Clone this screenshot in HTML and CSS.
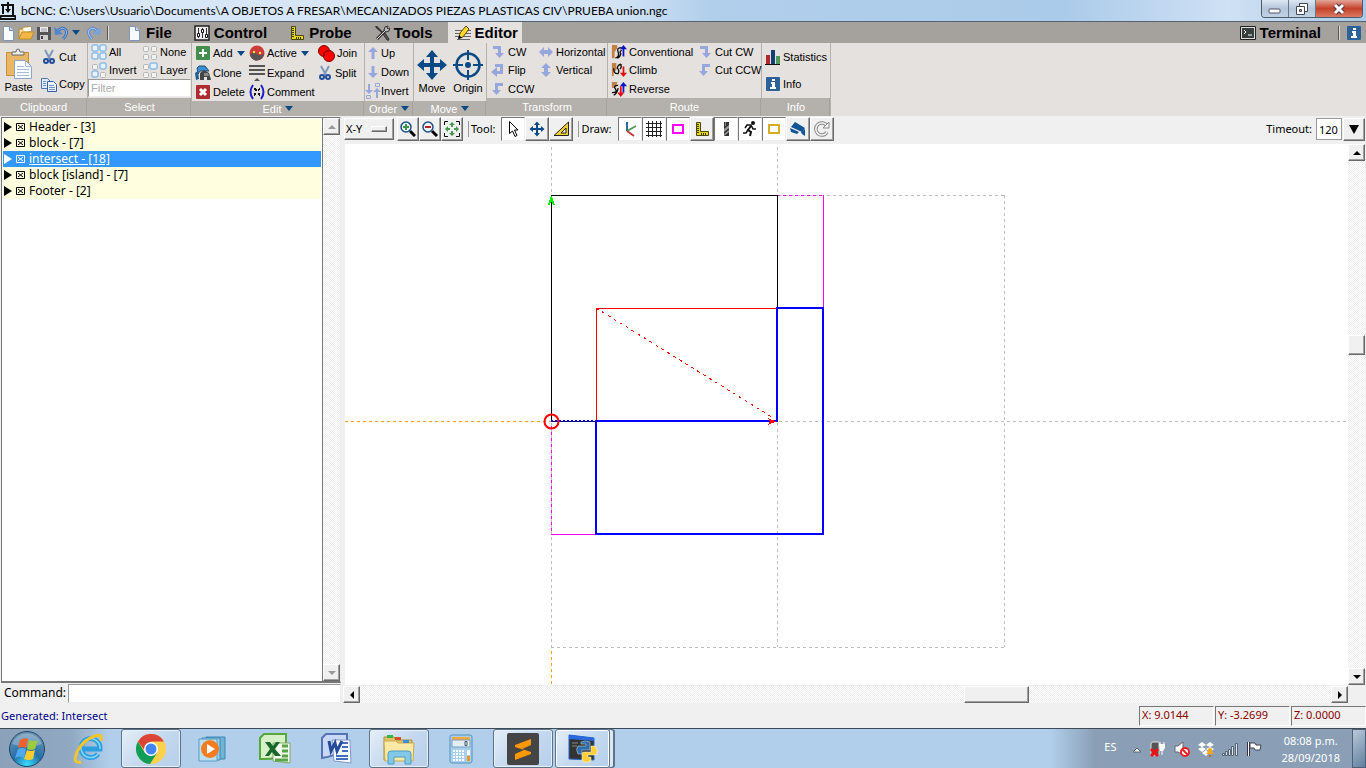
FILE: index.html
```html
<!DOCTYPE html>
<html lang="en">
<head>
    <meta charset="UTF-8">
    <title>bCNC</title>
    <link rel="stylesheet" href="styles.css">
</head>
<body>
<svg class="defs" aria-hidden="true">
    <symbol id="i-page" viewBox="0 0 16 16"><path d="M3.500 1.500h6l4 4v10h-10z" fill="#f7faff" stroke="#7f97b8"/><path d="M9.500 1.500v4h4" fill="#cfdcf0" stroke="#6d8fbd"/></symbol>
    <symbol id="i-open" viewBox="0 0 16 16"><path d="M1 14V4h4l1-2h7v3" fill="#f7dc8c" stroke="#b5872c"/><path d="M5 3l8-1v4H6z" fill="#fff"/><path d="M1 14L4 7h12l-3 7z" fill="#f3b748" stroke="#c68a24"/></symbol>
    <symbol id="i-save" viewBox="0 0 16 16"><path d="M1 2h14v13H1z" fill="#555"/><path d="M4 2h8v5H4z" fill="#eee"/><path d="M5 4h6M5 6h6" stroke="#999"/><path d="M4 10h8v5H4z" fill="#cfcfcf"/><path d="M5 11h2v3H5z" fill="#444"/></symbol>
    <symbol id="i-undo" viewBox="0 0 16 16"><path d="M4 6q4-5 8-1 2 4-3 9" fill="none" stroke="#3f74bd" stroke-width="3"/><path d="M4 6q4-5 8-1 2 4-3 9" fill="none" stroke="#8db4e8"/><path d="M0 2l1 8 8-1z" fill="#4f86cf"/></symbol>
    <symbol id="i-redo" viewBox="0 0 16 16"><path d="M12 6Q8 1 4 5q-2 4 3 9" fill="none" stroke="#5f8fd0" stroke-width="3"/><path d="M12 6Q8 1 4 5q-2 4 3 9" fill="none" stroke="#a9c6ee"/><path d="M16 2l-1 8-8-1z" fill="#76a2de"/></symbol>
    <symbol id="i-control" viewBox="0 0 16 16"><path d="M1 1h14v14H1z" fill="#eee" stroke="#222" stroke-width="1.500"/><path d="M4.500 3v10M8.500 3v10M12.500 3v10" stroke="#333"/><path d="M3.500 8.500h2v3h-2zM7.500 4.500h2v3h-2zM11.500 9.500h2v3h-2z" fill="#fff" stroke="#111"/></symbol>
    <symbol id="i-ruler" viewBox="0 0 16 16"><path d="M2.500 1.500h4v9h8v4h-12z" fill="#e5d827" stroke="#4e4900"/><path d="M3 3.500h2M3 5.500h2M3 7.500h2M3 9.500h2M3 11.500h2M7.500 12v2M9.500 12v2M11.500 12v2" stroke="#3d3900"/></symbol>
    <symbol id="i-tools" viewBox="0 0 16 16"><path d="M1 1l2 0 8 8-1 1-8-7z" fill="#333"/><path d="M9 9l4 6q2 1 2-1l-4-6z" fill="#555" stroke="#333"/><path d="M12 5L3 14" stroke="#333" stroke-width="3"/><path d="M12 5L3 14" stroke="#ddd"/><path d="M14 1l-3 1-1 3 2 2 3-1 1-3-2 1-1-1z" fill="#bbb" stroke="#333"/></symbol>
    <symbol id="i-edit" viewBox="0 0 16 16"><path d="M0 5.500h16M0 8.500h16M0 11.500h16M2 14.500h13" stroke="#666"/><path d="M4 13l1-5 6-7 3 3-6 8z" fill="#ffd829" stroke="#554600"/><path d="M3 14l1-4 3 3z" fill="#000"/></symbol>
    <symbol id="i-term" viewBox="0 0 16 16"><path d="M.500 1.500h15v13H.500z" fill="#ddd" stroke="#222"/><path d="M2 3h12v10H2z" fill="#37403d"/><path d="M4 5l2 2-2 2M8 10h4" fill="none" stroke="#fff"/></symbol>
    <symbol id="i-info" viewBox="0 0 16 16"><rect x="1" y="1" width="14" height="14" rx="1" fill="#2b6299"/><path d="M7 3h3v2H7zM6 6h4v5h1v2H5v-2h2V8H6z" fill="#fff"/></symbol>
    <symbol id="i-paste" viewBox="0 0 32 32"><path d="M3.500 4.500h22v23h-22z" fill="#e9b765" stroke="#c89036"/><path d="M9 7V4h4q0-3 2-3t2 3h4v3z" fill="#eee" stroke="#666"/><path d="M11.500 12.500h11l6 6v12h-17z" fill="#f9fcff" stroke="#8da4c4"/><path d="M22.500 12.500v6h6M14 18.500h7M14 21.500h12M14 24.500h12M14 27.500h12" fill="none" stroke="#a9bddb"/></symbol>
    <symbol id="i-cut" viewBox="0 0 16 16"><path d="M4 1l5 9M12 1L7 10" stroke="#7d98ba" stroke-width="2"/><circle cx="5" cy="12" r="2" fill="none" stroke="#234e99" stroke-width="2"/><circle cx="11" cy="12" r="2" fill="none" stroke="#234e99" stroke-width="2"/></symbol>
    <symbol id="i-copy" viewBox="0 0 16 16"><path d="M.500 2.500h6l3 3v7h-9z" fill="#dfeaff" stroke="#4b73b4"/><path d="M6.500 5.500h6l3 3v7h-9z" fill="#eaf2ff" stroke="#345faa"/><path d="M2 5.500h3M2 7.500h3M2 9.500h3M8 9.500h5M8 11.500h6M8 13.500h6" stroke="#6e92cc"/></symbol>
    <symbol id="i-all" viewBox="0 0 16 16"><g fill="#e8f2fc" stroke="#5fa5e5"><rect x="1" y="1" width="6" height="6" rx="1"/><rect x="9" y="1" width="6" height="6" rx="1"/><rect x="1" y="9" width="6" height="6" rx="1"/><rect x="9" y="9" width="6" height="6" rx="1"/></g></symbol>
    <symbol id="i-none" viewBox="0 0 16 16"><g fill="#f2f2f2" stroke="#b6b6b6"><rect x="1.500" y="2.500" width="5" height="5" rx="1"/><rect x="9.500" y="2.500" width="5" height="5" rx="1"/><rect x="1.500" y="10.500" width="5" height="5" rx="1"/><rect x="9.500" y="10.500" width="5" height="5" rx="1"/></g></symbol>
    <symbol id="i-invsel" viewBox="0 0 16 16"><g fill="#f2f2f2" stroke="#b6b6b6"><rect x="1.500" y="2.500" width="5" height="5" rx="1"/><rect x="9.500" y="10.500" width="5" height="5" rx="1"/></g><g fill="#e8f2fc" stroke="#5fa5e5"><rect x="9" y="1" width="6" height="6" rx="1"/><rect x="1" y="9" width="6" height="6" rx="1"/></g></symbol>
    <symbol id="i-layer" viewBox="0 0 16 16"><g fill="#f2f2f2" stroke="#b6b6b6"><rect x="1.500" y="2.500" width="5" height="5" rx="1"/><rect x="1.500" y="10.500" width="5" height="5" rx="1"/><rect x="9.500" y="10.500" width="5" height="5" rx="1"/></g><rect x="8" y="1" width="7" height="6" rx="1" fill="#e8f2fc" stroke="#5fa5e5"/></symbol>
    <symbol id="i-add" viewBox="0 0 16 16"><rect x="1" y="1" width="14" height="14" rx="1" fill="#438e4c"/><path d="M8 4v8M4 8h8" stroke="#fff" stroke-width="2"/></symbol>
    <symbol id="i-del" viewBox="0 0 16 16"><rect x="1" y="1" width="14" height="14" rx="1" fill="#ae2b30"/><path d="M5 5l6 6M11 5l-6 6" stroke="#fff" stroke-width="3"/></symbol>
    <symbol id="i-clone" viewBox="0 0 16 16"><path d="M2 3l2-2h6l4 5H5L3 9z" fill="#3a8fd6" stroke="#284d70"/><path d="M0 8l3-2 1 8-3 1z" fill="#1f5c90"/><path d="M5 15V8l4-3 5 3 2 7h-4v-3H9v3z" fill="#444"/><path d="M9 8h4l1 3H9z" fill="#888"/></symbol>
    <symbol id="i-active" viewBox="0 0 16 16"><circle cx="8" cy="8" r="7.500" fill="#cf3a3a"/><path d="M1 10q4-5 7-1 4 3 7-1-1 7-7 7.500-5 0-7-5.500z" fill="#555"/><circle cx="5" cy="7" r="1.200" fill="#ffe14b"/><circle cx="11" cy="8" r="1.200" fill="#ffe14b"/></symbol>
    <symbol id="i-expand" viewBox="0 0 16 16"><path d="M0 1h16M0 5h16M0 9h16" stroke="#555" stroke-width="2"/><path d="M5 16l3-3 3 3z" fill="#555"/></symbol>
    <symbol id="i-comment" viewBox="0 0 16 16"><path d="M4 1q-5 7 0 14M12 1q5 7 0 14" fill="none" stroke="#1a22c8" stroke-width="2"/><path d="M5 4h2v1h1v2H6V6H5zM10 4h1v2h-1v1H9V5h1zM5 9h2v2H6v1H5zM9 9h2v3h-1v-1H9z" fill="#111"/></symbol>
    <symbol id="i-join" viewBox="0 0 18 18"><circle cx="7" cy="7" r="5.500" fill="#f00" stroke="#700"/><circle cx="12" cy="12" r="5.500" fill="#f00" stroke="#700"/><path d="M7 12q0-5 5-5" fill="none" stroke="#900"/></symbol>
    <symbol id="i-up" viewBox="0 0 16 16"><path d="M8 2l5 5H9.500v7h-3V7H3z" fill="#98a6de"/></symbol>
    <symbol id="i-down" viewBox="0 0 16 16"><path d="M8 14L3 9h3.500V2h3v7H13z" fill="#98a6de"/></symbol>
    <symbol id="i-invord" viewBox="0 0 16 16"><path d="M4 11L0 7h3V1h2v6h3zM12 5l4 4h-3v6h-2V9H8z" fill="#98a6de"/><path d="M10.500.500h4v3h-4zM1.500 12.500h4v3h-4z" fill="none" stroke="#98a6de"/></symbol>
    <symbol id="i-move" viewBox="0 0 32 32"><path d="M16 1l6 7h-4v6h6v-4l7 6-7 6v-4h-6v6h4l-6 7-6-7h4v-6H8v4l-7-6 7-6v4h6V8h-4z" fill="#0a4a86"/></symbol>
    <symbol id="i-origin" viewBox="0 0 32 32"><circle cx="16" cy="16" r="11.500" fill="none" stroke="#0a4a86" stroke-width="2.500"/><circle cx="16" cy="16" r="3" fill="#0a4a86"/><path d="M16 1v10M16 21v10M1 16h10M21 16h10" stroke="#0a4a86" stroke-width="2"/></symbol>
    <symbol id="i-cw" viewBox="0 0 16 16"><path d="M3 2h8v7h3l-4.500 5L5 9h3V5H3z" fill="#98a6de"/></symbol>
    <symbol id="i-ccw" viewBox="0 0 16 16"><path d="M13 2H5v7H2l4.500 5L11 9H8V5h5z" fill="#98a6de"/></symbol>
    <symbol id="i-flip" viewBox="0 0 16 16"><path d="M5 2h8v10H7v3L1 10l6-5v4h3V5H5z" fill="#98a6de"/></symbol>
    <symbol id="i-horiz" viewBox="0 0 16 16"><path d="M1 8l5-5v3h4V3l5 5-5 5v-3H6v3z" fill="#98a6de"/></symbol>
    <symbol id="i-vert" viewBox="0 0 16 16"><path d="M8 1l5 5h-3v4h3l-5 5-5-5h3V6H3z" fill="#98a6de"/></symbol>
    <symbol id="i-conv" viewBox="0 0 18 18"><path d="M1 1h6v4L4 9v7H1z" fill="#c08048"/><path d="M12 4Q6 4 8 9q2 5-3 7M12 7q-3 2-1 4-1 4-4 5" fill="none" stroke="#111" stroke-width="1.500"/><path d="M14 14V4" stroke="#0b15c8" stroke-width="2"/><path d="M14 1l4 5h-8z" fill="#0b15c8"/></symbol>
    <symbol id="i-climb" viewBox="0 0 18 18"><path d="M1 1h5v8l-3 3v4H1z" fill="#c08048"/><path d="M3 7q0 7 5 6 2-4-1-6 1-5 5-4M10 2q3 3 0 6" fill="none" stroke="#111" stroke-width="1.500"/><path d="M14 5v9" stroke="#e01010" stroke-width="2"/><path d="M14 17l4-5h-8z" fill="#e01010"/></symbol>
    <symbol id="i-rev" viewBox="0 0 18 18"><path d="M1 1h6l-1 5-3 2H1z" fill="#c08048"/><path d="M8 5q-6 0-3 4 3 4-4 4M8 8q-1 6-5 8" fill="none" stroke="#111" stroke-width="1.500"/><path d="M14 13V4" stroke="#0b15c8" stroke-width="2"/><path d="M14 1l4 5h-8z" fill="#0b15c8"/><path d="M11 6v8" stroke="#e01010" stroke-width="2"/><path d="M11 18l4-5H7z" fill="#e01010"/></symbol>
    <symbol id="i-stat" viewBox="0 0 16 16"><path d="M1 6h4v9H1z" fill="#b02b30"/><path d="M6 1h4v14H6z" fill="#123f78"/><path d="M11 7h4v8h-4z" fill="#4f9a55"/><path d="M0 15.500h15" stroke="#111"/></symbol>
    <symbol id="i-box" viewBox="0 0 10 10"><path d="M.500 1.500h8v7h-8zM2 3l5 4M7 3L2 7" fill="none" stroke="currentColor"/></symbol>
    <symbol id="i-zin" viewBox="0 0 16 16"><path d="M10 10l5 5" stroke="#000" stroke-width="3"/><circle cx="6" cy="6" r="5" fill="#eef4f8" stroke="#1b4f86" stroke-width="1.500"/><path d="M6 3v6M3 6h6" stroke="#3d9447" stroke-width="2"/></symbol>
    <symbol id="i-zout" viewBox="0 0 16 16"><path d="M10 10l5 5" stroke="#000" stroke-width="3"/><circle cx="6" cy="6" r="5" fill="#eef4f8" stroke="#1b4f86" stroke-width="1.500"/><path d="M3 6h6" stroke="#b5252b" stroke-width="2"/></symbol>
    <symbol id="i-fit" viewBox="0 0 16 16"><path d="M.500 4V.500H4M12 .500h3.500V4M15.500 12v3.500H12M4 15.500H.500V12" fill="none" stroke="#111"/><path d="M8 1l3 3H9v2H7V4H5zM8 15l-3-3h2v-2h2v2h2zM1 8l3-3v2h2v2H4v2zM15 8l-3 3V9h-2V7h2V5z" fill="#459a4e"/></symbol>
    <symbol id="i-arrow" viewBox="0 0 16 16"><path d="M4.500.500v12l3-2.500 2.500 5.500 2-1-2.500-5.500h3.500z" fill="#fff" stroke="#000"/></symbol>
    <symbol id="i-tri" viewBox="0 0 16 16"><path d="M1 14.500L15.500 1v13.500z" fill="#f4cf34" stroke="#222"/><path d="M8 12l5-5v5z" fill="#eee" stroke="#222"/></symbol>
    <symbol id="i-axes" viewBox="0 0 16 16"><path d="M5 1v9" stroke="#2b6a9e" stroke-width="2"/><path d="M5 10l9-5" stroke="#4d9d56" stroke-width="2"/><path d="M5 10l7 5" stroke="#c4393c" stroke-width="2"/></symbol>
    <symbol id="i-grid" viewBox="0 0 16 16"><path d="M2.500 0v16M6.500 0v16M10.500 0v16M14.500 0v16M0 2.500h16M0 6.500h16M0 10.500h16M0 14.500h16" stroke="#222"/></symbol>
    <symbol id="i-margin" viewBox="0 0 16 16"><path d="M3 4h10v8H3z" fill="#fff" stroke="#f0f" stroke-width="2"/></symbol>
    <symbol id="i-work" viewBox="0 0 16 16"><path d="M3 4h10v8H3z" fill="#fff" stroke="#d6ad26" stroke-width="2"/></symbol>
    <symbol id="i-mill" viewBox="0 0 16 16"><path d="M6 1h5v14H6z" fill="#333"/><path d="M6 8l5-4v3L6 11zM6 13l5-4v2l-5 4z" fill="#999"/><path d="M7.500 1v4" stroke="#888"/></symbol>
    <symbol id="i-run" viewBox="0 0 16 16"><circle cx="11" cy="2" r="2" fill="#111"/><path d="M9 5l-3 4 3 2-1 4" fill="none" stroke="#111" stroke-width="2"/><path d="M3 7l2-3h4l2 4h3M6 9l-2 3H1" fill="none" stroke="#111" stroke-width="1.500"/></symbol>
    <symbol id="i-cam" viewBox="0 0 16 16"><path d="M5 1l10 6-3 4L1 6z" fill="#0f5596"/><path d="M0 7l9 4-2 2-6-2z" fill="#0f5596"/><path d="M11 11l4-3v7l-3-2z" fill="#0f5596"/></symbol>
    <symbol id="i-refresh" viewBox="0 0 16 16"><path d="M13 5a6 6 0 1 0 0 6" fill="none" stroke="#888" stroke-width="3.500"/><path d="M13 5a6 6 0 1 0 0 6" fill="none" stroke="#f4f4f4" stroke-width="1.500"/><path d="M9 7h6V1z" fill="#f4f4f4" stroke="#888"/></symbol>
</svg>

<header class="titlebar">
    <svg class="app-icon" viewBox="0 0 16 18"><path d="M1 3h13M8 0v10M3 3v9M13 3v10M1 14h14l1 3H0z" fill="none" stroke="#111" stroke-width="2"/><path d="M5 7h6l-3 4z" fill="#111"/></svg>
    <h1>bCNC: C:\Users\Usuario\Documents\A OBJETOS A FRESAR\MECANIZADOS PIEZAS PLASTICAS CIV\PRUEBA union.ngc</h1>
    <div class="win-buttons">
        <button aria-label="Minimize"><svg width="14" height="12"><rect x="1" y="6" width="11" height="4" rx="1" fill="#fff" stroke="#556"/></svg></button>
        <button aria-label="Restore"><svg width="14" height="14"><path d="M4.500 1.500h8v8h-8z" fill="#fff" stroke="#445"/><path d="M1.500 4.500h8v8h-8z" fill="#fff" stroke="#445"/><path d="M4.500 7.500h2v2h-2z" fill="#9bb" stroke="#445"/></svg></button>
        <button class="close" aria-label="Close"><svg width="14" height="12"><path d="M3 2l8 8M11 2l-8 8" stroke="#534" stroke-width="5"/><path d="M3 2l8 8M11 2l-8 8" stroke="#fff" stroke-width="3"/></svg></button>
    </div>
</header>

<nav class="tabbar">
    <div class="quick">
        <button aria-label="New"><svg class="ico"><use href="#i-page"/></svg></button>
        <button aria-label="Open"><svg class="ico"><use href="#i-open"/></svg></button>
        <button aria-label="Save"><svg class="ico"><use href="#i-save"/></svg></button>
        <button aria-label="Undo"><svg class="ico"><use href="#i-undo"/></svg></button>
        <button aria-label="Undo list"><i class="caret"></i></button>
        <button aria-label="Redo"><svg class="ico"><use href="#i-redo"/></svg></button>
    </div>
    <i class="sep"></i>
    <button class="tab"><svg class="ico"><use href="#i-page"/></svg>File</button>
    <button class="tab"><svg class="ico"><use href="#i-control"/></svg>Control</button>
    <button class="tab"><svg class="ico"><use href="#i-ruler"/></svg>Probe</button>
    <button class="tab"><svg class="ico"><use href="#i-tools"/></svg>Tools</button>
    <button class="tab current"><svg class="ico"><use href="#i-edit"/></svg>Editor</button>
    <button class="tab terminal"><svg class="ico"><use href="#i-term"/></svg>Terminal</button>
    <i class="sep"></i>
    <button class="help" aria-label="About"><svg class="ico"><use href="#i-info"/></svg></button>
</nav>

<section class="ribbon">
    <div class="group clipboard">
        <div class="tools">
            <button class="big"><svg><use href="#i-paste"/></svg>Paste</button>
            <button><svg class="ico"><use href="#i-cut"/></svg>Cut</button>
            <button><svg class="ico"><use href="#i-copy"/></svg>Copy</button>
        </div>
        <h2>Clipboard</h2>
    </div>
    <div class="group select">
        <div class="tools">
            <button><svg class="ico"><use href="#i-all"/></svg>All</button>
            <button><svg class="ico"><use href="#i-none"/></svg>None</button>
            <button><svg class="ico"><use href="#i-invsel"/></svg>Invert</button>
            <button><svg class="ico"><use href="#i-layer"/></svg>Layer</button>
            <input type="text" placeholder="Filter" aria-label="Filter">
        </div>
        <h2>Select</h2>
    </div>
    <div class="group edit">
        <div class="tools">
            <button><svg class="ico"><use href="#i-add"/></svg>Add<i class="caret"></i></button>
            <button><svg class="ico"><use href="#i-active"/></svg>Active<i class="caret"></i></button>
            <button><svg class="ico wide"><use href="#i-join"/></svg>Join</button>
            <button><svg class="ico"><use href="#i-clone"/></svg>Clone</button>
            <button><svg class="ico"><use href="#i-expand"/></svg>Expand</button>
            <button><svg class="ico"><use href="#i-cut"/></svg>Split</button>
            <button><svg class="ico"><use href="#i-del"/></svg>Delete</button>
            <button><svg class="ico"><use href="#i-comment"/></svg>Comment</button>
        </div>
        <button class="more">Edit<i class="caret"></i></button>
    </div>
    <div class="group order">
        <div class="tools">
            <button><svg class="ico"><use href="#i-up"/></svg>Up</button>
            <button><svg class="ico"><use href="#i-down"/></svg>Down</button>
            <button><svg class="ico"><use href="#i-invord"/></svg>Invert</button>
        </div>
        <button class="more">Order<i class="caret"></i></button>
    </div>
    <div class="group move">
        <div class="tools">
            <button class="big"><svg><use href="#i-move"/></svg>Move</button>
            <button class="big"><svg><use href="#i-origin"/></svg>Origin</button>
        </div>
        <button class="more">Move<i class="caret"></i></button>
    </div>
    <div class="group transform">
        <div class="tools">
            <button><svg class="ico"><use href="#i-cw"/></svg>CW</button>
            <button><svg class="ico"><use href="#i-horiz"/></svg>Horizontal</button>
            <button><svg class="ico"><use href="#i-flip"/></svg>Flip</button>
            <button><svg class="ico"><use href="#i-vert"/></svg>Vertical</button>
            <button><svg class="ico"><use href="#i-ccw"/></svg>CCW</button>
        </div>
        <h2>Transform</h2>
    </div>
    <div class="group route">
        <div class="tools">
            <button><svg class="ico"><use href="#i-conv"/></svg>Conventional</button>
            <button><svg class="ico"><use href="#i-cw"/></svg>Cut CW</button>
            <button><svg class="ico"><use href="#i-climb"/></svg>Climb</button>
            <button><svg class="ico"><use href="#i-ccw"/></svg>Cut CCW</button>
            <button><svg class="ico"><use href="#i-rev"/></svg>Reverse</button>
        </div>
        <h2>Route</h2>
    </div>
    <div class="group info">
        <div class="tools">
            <button><svg class="ico"><use href="#i-stat"/></svg>Statistics</button>
            <button><svg class="ico"><use href="#i-info"/></svg>Info</button>
        </div>
        <h2>Info</h2>
    </div>
</section>

<main>
    <section class="editor">
        <div class="listing">
            <ul>
                <li><svg><use href="#i-box"/></svg>Header - [3]</li>
                <li><svg><use href="#i-box"/></svg>block - [7]</li>
                <li class="current"><svg><use href="#i-box"/></svg><span>intersect - [18]</span></li>
                <li><svg><use href="#i-box"/></svg>block [island] - [7]</li>
                <li><svg><use href="#i-box"/></svg>Footer - [2]</li>
            </ul>
            <div class="scroll vertical disabled">
                <button aria-label="Scroll list up"><i class="tip up"></i></button>
                <button aria-label="Scroll list down"><i class="tip down"></i></button>
            </div>
        </div>
        <div class="command">
            <label for="cmd">Command:</label>
            <input type="text" id="cmd">
        </div>
    </section>

    <section class="view">
        <div class="toolbar">
            <div class="plane">
                <select aria-label="View"><option>X-Y</option><option>X-Z</option><option>Y-Z</option></select>
                <i class="knob"></i>
            </div>
            <div class="set zoom">
                <button aria-label="Zoom in"><svg class="ico"><use href="#i-zin"/></svg></button>
                <button aria-label="Zoom out"><svg class="ico"><use href="#i-zout"/></svg></button>
                <button aria-label="Fit to screen"><svg class="ico"><use href="#i-fit"/></svg></button>
            </div>
            <span class="caption">Tool:</span>
            <div class="set">
                <button class="on" aria-label="Select tool"><svg class="ico"><use href="#i-arrow"/></svg></button>
                <button aria-label="Pan"><svg class="ico"><use href="#i-move"/></svg></button>
                <button aria-label="Measure"><svg class="ico"><use href="#i-tri"/></svg></button>
            </div>
            <span class="caption">Draw:</span>
            <div class="set">
                <button class="on" aria-label="Axes"><svg class="ico"><use href="#i-axes"/></svg></button>
                <button class="on" aria-label="Grid"><svg class="ico"><use href="#i-grid"/></svg></button>
                <button class="on" aria-label="Margins"><svg class="ico"><use href="#i-margin"/></svg></button>
                <button aria-label="Probe"><svg class="ico"><use href="#i-ruler"/></svg></button>
                <button class="on" aria-label="Paths"><svg class="ico"><use href="#i-mill"/></svg></button>
                <button class="on" aria-label="Rapid motion"><svg class="ico"><use href="#i-run"/></svg></button>
                <button class="on" aria-label="Workarea"><svg class="ico"><use href="#i-work"/></svg></button>
                <button aria-label="Camera"><svg class="ico"><use href="#i-cam"/></svg></button>
                <button aria-label="Refresh"><svg class="ico"><use href="#i-refresh"/></svg></button>
            </div>
            <label class="timeout" for="timeout">Timeout:</label>
            <input type="text" id="timeout" value="120">
            <button class="drop" aria-label="Timeout values"><i></i></button>
        </div>
        <div class="canvas">
            <svg shape-rendering="crispEdges" fill="none">
                <!-- grid -->
                <path class="dash" stroke="#bebebe" d="M206.500 3V541M432.500 3V503M659.500 51V503M206 51.500H659M206 277.500H1203M206 503.500H659"/>
                <!-- work area -->
                <path class="dash" stroke="#ffa500" d="M0 277.500H206M206.500 507V541"/>
                <!-- margins -->
                <path stroke="#f0f" d="M478.500 51V164M206 390.500H251"/>
                <path class="dash" stroke="#f0f" d="M432 51.500H478M206.500 282V390"/>
                <!-- toolpaths -->
                <path stroke="#000" d="M251 277.500H206.500V51.500H432.500V164"/>
                <path stroke="#f00" d="M251.500 277V164.500H432"/>
                <path stroke="#f00" stroke-dasharray="3 4" d="M251 164L430 275"/>
                <path stroke="#00f" stroke-width="2" stroke-dasharray="2 2" d="M206 277H251"/>
                <path stroke="#00f" stroke-width="2" d="M251 390V277H432V164H478V390H250"/>
                <path fill="#0e0" d="M206 52L203 61H205L206 58H207L208 61H210L207 52z"/>
                <path fill="#f00" d="M423 274L431 277.500L423 281L425 277.500z"/>
                <circle cx="206.500" cy="277.500" r="7" stroke="#f00" stroke-width="2" shape-rendering="auto"/>
            </svg>
        </div>
        <div class="scroll vertical">
            <button aria-label="Scroll up"><i class="tip up"></i></button>
            <div class="trough"><i class="thumb"></i></div>
            <button aria-label="Scroll down"><i class="tip down"></i></button>
        </div>
        <div class="scroll horizontal">
            <button aria-label="Scroll left"><i class="tip left"></i></button>
            <div class="trough"><i class="thumb"></i></div>
            <button aria-label="Scroll right"><i class="tip right"></i></button>
        </div>
    </section>
</main>

<footer class="status">
    <span class="message">Generated: Intersect</span>
    <output>X: 9.0144</output>
    <output>Y: -3.2699</output>
    <output>Z: 0.0000</output>
</footer>

<div class="taskbar">
    <button class="start" aria-label="Start">
        <svg width="38" height="38" viewBox="0 0 38 38">
            <defs><radialGradient id="orb" cx=".5" cy=".95" r=".9"><stop offset="0" stop-color="#39e0ff"/><stop offset=".45" stop-color="#2470a8"/><stop offset="1" stop-color="#6d94b4"/></radialGradient></defs>
            <circle cx="19" cy="19" r="17.500" fill="url(#orb)" stroke="#1f4565"/>
            <path d="M4 14a16 16 0 0 1 30 0q-15 6-30 0z" fill="#fff" opacity=".25"/>
            <path d="M12 10q4-3 8-1l-2 9q-4-2-8 0z" fill="#f0602c"/><path d="M21 10q4 2 9 0l-3 9q-4 2-8 0z" fill="#9bcb3c"/>
            <path d="M10 19q4-2 8 0l-2 9q-4-3-9 0z" fill="#4fa9ec"/><path d="M19 20q4 2 8 0l-2 9q-4 2-9 0z" fill="#fecb2e"/>
        </svg>
    </button>
    <div class="apps">
        <button aria-label="Internet Explorer"><svg width="32" height="32" viewBox="0 0 32 32"><path d="M25 21a9.500 9.500 0 1 1 2-5H10" fill="none" stroke="#2b9fe2" stroke-width="5"/><path d="M25 21a9.500 9.500 0 1 1 2-5" fill="none" stroke="#8ad6fa" stroke-width="1.500"/><path d="M28 8q2-8-6-5Q10 7 4 19q-5 12 4 10" fill="none" stroke="#f3c52d" stroke-width="3"/></svg></button>
        <button class="open" aria-label="Chrome"><svg width="30" height="30" viewBox="0 0 30 30"><circle cx="15" cy="15" r="15" fill="#fdd24a"/><path d="M2 7.500A15 15 0 0 0 14 30l7-11H9z" fill="#0f9d58"/><path d="M2 7.500A15 15 0 0 1 28 7.500H15L9 17z" fill="#db4437"/><circle cx="15" cy="15" r="7" fill="#fff"/><circle cx="15" cy="15" r="5.500" fill="#4285f4"/></svg></button>
        <button aria-label="Media Player"><svg width="30" height="28" viewBox="0 0 30 28"><path d="M8 2h19v22H8z" fill="#6fb3d6" stroke="#3f88b2"/><path d="M4 3h18v22H4z" fill="#9bd0ea" stroke="#3f88b2"/><path d="M1 4h18v22H1z" fill="#b9dff1" stroke="#5b9dc2"/><circle cx="12" cy="14" r="9" fill="#f47c20"/><path d="M9 9l8 5-8 5z" fill="#fff"/></svg></button>
        <button aria-label="Excel"><svg width="32" height="32" viewBox="0 0 32 32"><path d="M5 1h22v18q-8 8-26 7V5z" fill="#d8f0c8" stroke="#56a83a" stroke-width="2"/><path d="M14 10h17v20l-17-2z" fill="#f4fbf0" stroke="#7aa768"/><path d="M23 13h6M23 18h6M23 23h6M16 27h13" stroke="#5ba445" stroke-width="3"/><path d="M6 9h5l3 4 3-4h4l-5 7 6 7h-6l-3-4-3 4H6l5-7z" fill="#19692c"/></svg></button>
        <button aria-label="Word"><svg width="32" height="32" viewBox="0 0 32 32"><path d="M5 1h21v6q0 14-25 18V5z" fill="#c9d8f4" stroke="#5673b5" stroke-width="2"/><path d="M11 7h18l1 23-17-2z" fill="#f6f9ff" stroke="#7f97c8"/><path d="M21 10h6M21 14h6M21 18h6M15 23h12M15 26h12" stroke="#456cbd" stroke-width="2"/><path d="M8 8l2 10 4-8 2 8 5-10" fill="none" stroke="#244b9b" stroke-width="3"/></svg></button>
        <button class="open" aria-label="Explorer"><svg width="34" height="32" viewBox="0 0 34 32"><path d="M2 4h10l2 3h16v20H2z" fill="#e3c267" stroke="#b08e36"/><path d="M5 2h6v3H5z" fill="#38b549"/><path d="M13 4h6v3h-6z" fill="#d44e2f"/><path d="M2 8h12l2 2h16l-1 18H3z" fill="#f9e9a4" stroke="#c9ab4e"/><path d="M21 7h6v3h-6z" fill="#3d8fde"/><path d="M6 31V21q0-3 3-3h17q3 0 3 3v10h-6v-7H12v7z" fill="#84c8e8" stroke="#4d9cc5"/></svg></button>
        <button aria-label="Calculator"><svg width="24" height="30" viewBox="0 0 24 30"><rect x="1" y="1" width="22" height="28" rx="2" fill="#a7d0ee" stroke="#5393bf"/><path d="M3 3h18v3H3z" fill="#f7a63c"/><path d="M3 6h18v7H3z" fill="#e4eef6" stroke="#7a9cba"/><path d="M16 7.500h2v4h-2z" fill="none" stroke="#456"/><path d="M4 17h12M4 20h12M4 23h12M4 26h12" stroke="#fff" stroke-width="2" stroke-dasharray="2 1"/><path d="M18 16h3v5h-3z" fill="#fff"/><path d="M18 22h3v5h-3z" fill="#f39320"/></svg></button>
        <button class="open" aria-label="Sublime Text"><svg width="32" height="32" viewBox="0 0 32 32"><rect width="32" height="32" rx="2" fill="#454545"/><path d="M8 12l16-6v6l-9 4 9 3v2L8 27v-6l9-4-9-3z" fill="#ff9800"/></svg></button>
        <button class="open stacked" aria-label="Python"><svg width="30" height="30" viewBox="0 0 30 30"><path d="M1 1l25 3v22L1 25z" fill="#333" stroke="#2364c8"/><path d="M1 1l25 3v3L1 5z" fill="#2a6ae0"/><path d="M4 9h6M4 12h5" stroke="#888"/><path d="M13 8q4-2 9 0v8h-8v4h-4q-3-5 0-8h8v-2h-5z" fill="#2f6fa5" stroke="#cde" stroke-width=".5"/><path d="M23 12h4q4 5 1 9h-8v2h3v4q-4 3-9 0v-7q0-2 2-2h7z" fill="#fdd03b" stroke="#fff" stroke-width=".5"/></svg></button>
    </div>
    <div class="tray">
        <span class="lang">ES</span>
        <svg width="10" height="16"><path d="M1 11l4-4 4 4z" fill="#fff" stroke="#567"/></svg>
        <svg width="16" height="16"><path d="M1 3q0-2 2-2h6v13H1z" fill="#555" stroke="#ddd"/><path d="M9 3h6v4l-2 3h-3z" fill="#fff"/><path d="M10 1v3M14 1v3M12 9v5" stroke="#fff"/><path d="M1 8l7 7M8 8l-7 7" stroke="#e11" stroke-width="3"/></svg>
        <svg width="16" height="16"><path d="M1 5h3l5-4v13L4 11H1z" fill="#fff" stroke="#667"/><circle cx="11" cy="11" r="4" fill="#fff" stroke="#e32424" stroke-width="2"/><path d="M8 8l6 6" stroke="#e32424" stroke-width="2"/></svg>
        <svg width="16" height="16"><path d="M4 1l4 3-4 2-4-2zM12 1l4 3-4 2-4-2zM4 6l4 2-4 3-4-3zM12 6l4 2-4 3-4-3zM4 12l4-3 3 3-3 3z" fill="#fff"/><path d="M8 13q2-1 2-5 2-2 4 0 0 4 2 5z" fill="#f5a81c"/><path d="M11 14h2v2h-2z" fill="#b8740b"/></svg>
        <svg width="16" height="16"><path d="M.500 12.500h2v2h-2zM3.500 10.500h2v4h-2zM6.500 8.500h2v6h-2zM9.500 5.500h2v9h-2zM13.500 2.500h2v12h-2z" fill="#dfe6ee" stroke="#556677"/></svg>
        <svg width="16" height="16"><path d="M2.500 1v14" stroke="#334" stroke-width="3"/><path d="M2.500 1v14" stroke="#fff"/><path d="M4 2h5l1 2h5l-1 5H9L8 7H4z" fill="#fff" stroke="#445"/></svg>
        <time class="clock">08:08 p.m.<br>28/09/2018</time>
        <button class="desktop" aria-label="Show desktop"></button>
    </div>
</div>
</body>
</html>
```

FILE: styles.css
```css
* {
    box-sizing: border-box;
    margin: 0;
    padding: 0;
}

body {
    display: flex;
    flex-direction: column;
    height: 100vh;
    background: #f0f0f0;
    color: #000;
    font: 11px/16px "Noto Sans", "Open Sans", sans-serif;
    overflow: hidden;
}

button, input, select {
    border: none;
    border-radius: 0;
    background: none;
    color: inherit;
    font: inherit;
}

svg {
    display: block;
    flex: none;
}

.defs {
    position: absolute;
    width: 0;
    height: 0;
}

.ico {
    width: 16px;
    height: 16px;
}

.caret {
    border: 4px solid transparent;
    border-top: 5px solid #0a4a86;
    border-bottom: none;
    margin-left: 2px;
}

/* title bar */
.titlebar {
    display: flex;
    align-items: center;
    gap: 5px;
    height: 22px;
    background: linear-gradient(90deg, #d9e8f8, #d3e4f6 45%, #b1cfeb 52%, #abcbea 78%, #cfe1f4 90%, #a9c9e9);
    border-bottom: 1px solid #56626e;
    flex: none;
}

.app-icon {
    width: 16px;
    height: 18px;
}

.titlebar h1 {
    font: 12px/20px Lato, "Noto Sans", sans-serif;
    white-space: nowrap;
}

.win-buttons {
    display: flex;
    align-self: flex-start;
    margin: 0 3px 0 auto;
    border: 1px solid #4d5a68;
    border-top: none;
    border-radius: 0 0 4px 4px;
    overflow: hidden;
}

.win-buttons button {
    display: flex;
    align-items: center;
    justify-content: center;
    width: 27px;
    height: 17px;
    border-right: 1px solid #66778a;
    background: linear-gradient(#dce7f3, #b4c6da 50%, #bfd2e6);
}

.win-buttons .close {
    width: 46px;
    border: none;
    background: linear-gradient(#e3a598, #c5412a 50%, #da7a60);
}

/* page tabs */
.tabbar {
    display: flex;
    align-items: center;
    height: 21px;
    padding-right: 4px;
    background: #a5a19d;
    flex: none;
}

.quick {
    display: flex;
    align-items: center;
    gap: 2px;
}

.quick .caret {
    display: block;
    margin: 0 3px 0 0;
}

.sep {
    width: 2px;
    height: 14px;
    margin: 0 6px;
    border-left: 1px solid #555;
    border-right: 1px solid #ddd;
}

.tab {
    display: flex;
    align-items: center;
    gap: 4px;
    height: 21px;
    padding: 0 11px;
    font: bold 15px "Liberation Sans", Arial, sans-serif;
}

.tab.current {
    padding: 0 4px 0 7px;
    margin-left: 4px;
    background: #e5e1de;
}

.terminal {
    margin-left: auto;
}

/* ribbon */
.ribbon {
    display: flex;
    height: 73px;
    background: #e5e1de;
    font: 11px/14px "Liberation Sans", Arial, sans-serif;
    flex: none;
}

.group {
    display: flex;
    flex-direction: column;
    border-right: 1px solid #b4b0ac;
}

.group h2, .more {
    height: 18px;
    background: #b4b0ac;
    color: #fff;
    font: 11px/18px "Liberation Sans", Arial, sans-serif;
    text-align: center;
    box-shadow: inset -1px 0 #a5a19d;
}

.more {
    display: flex;
    align-items: center;
    justify-content: center;
    gap: 2px;
    height: 15px;
    line-height: 14px;
}

.tools {
    display: grid;
    flex: 1;
    align-items: center;
    justify-content: start;
}

.tools button {
    display: flex;
    align-items: center;
    gap: 2px;
    white-space: nowrap;
}

.tools .big {
    flex-direction: column;
    gap: 0;
}

.big svg {
    width: 32px;
    height: 32px;
}

.clipboard {
    width: 88px;
}

.clipboard .tools {
    grid-template-columns: 37px 50px;
    column-gap: 4px;
}

.clipboard .big {
    grid-row: span 2;
}

.select {
    width: 104px;
}

.select .tools {
    grid-template-columns: 51px 49px;
    grid-template-rows: 18px 18px 18px;
    padding-left: 3px;
}

.select input {
    grid-column: span 2;
    width: 103px;
    height: 18px;
    margin-left: -3px;
    padding-left: 2px;
    background: #fff;
    border: 1px solid #aaa;
    border-color: #999 #eee #eee #999;
}

.select input::placeholder {
    color: #aaa;
    opacity: 1;
}

.edit {
    width: 173px;
}

.edit .tools {
    grid-template-columns: 54px 68px 48px;
    padding-left: 3px;
}

.edit .wide {
    width: 18px;
    height: 18px;
}

.order {
    width: 49px;
}

.order .tools button {
    gap: 0;
}

.move {
    width: 73px;
}

.move .tools {
    grid-template-columns: 36px 36px;
}

.transform {
    width: 121px;
}

.transform .tools {
    grid-template-columns: 48px 69px;
    padding-left: 3px;
}

.route {
    width: 154px;
}

.route .tools {
    grid-template-columns: 86px 64px;
    padding-left: 3px;
}

.info {
    width: 69px;
}

.info .tools {
    padding-left: 3px;
}

/* file listing */
main {
    display: grid;
    grid-template-columns: 341px 1fr;
    flex: 1;
    min-height: 0;
}

.editor {
    display: flex;
    flex-direction: column;
    padding: 1px 0 0 1px;
    font-size: 12px;
}

.listing {
    display: flex;
    flex: 1;
    border: 1px solid #777;
    border-bottom: 2px solid #777;
    border-right-color: #eee;
    background: #fff;
}

.listing ul {
    flex: 1;
    padding: 1px;
    border-right: 1px solid #777;
    list-style: none;
}

.listing li {
    display: flex;
    align-items: center;
    height: 16px;
    background: #ffffe0;
}

.listing li::before {
    content: "";
    border: 5px solid transparent;
    border-left: 8px solid;
    border-right: none;
    margin: 0 4px 0 1px;
}

.listing li svg {
    width: 10px;
    height: 10px;
    margin-right: 3px;
}

.listing .current {
    background: #3399ff;
    color: #fff;
}

.current span {
    text-decoration: underline;
}

.command {
    display: flex;
    align-items: center;
    height: 20px;
    gap: 2px;
    padding-left: 3px;
}

.command input {
    flex: 1;
    height: 19px;
    background: #fff;
    border: 1px solid #999;
    border-color: #999 #eee #eee #999;
}

/* scrollbars */
.scroll {
    display: flex;
    background: repeating-conic-gradient(#fff 0 25%, #eee 0 50%) 0 0 / 2px 2px;
}

.vertical {
    flex-direction: column;
    width: 17px;
}

.scroll button, .thumb, .set button, .plane, .drop {
    background: #f0f0f0;
    border: 1px solid #fff;
    border-color: #fff #696969 #696969 #fff;
    box-shadow: inset -1px -1px #a0a0a0;
}

.scroll button {
    display: flex;
    align-items: center;
    justify-content: center;
    width: 17px;
    height: 17px;
    flex: none;
}

.vertical.disabled {
    justify-content: space-between;
}

.tip {
    border: 4px solid transparent;
}

.tip.up {
    border-top: none;
    border-bottom-color: #000;
}

.tip.down {
    border-bottom: none;
    border-top-color: #000;
}

.tip.left {
    border-left: none;
    border-right-color: #000;
}

.tip.right {
    border-right: none;
    border-left-color: #000;
}

.disabled .tip.up {
    border-bottom-color: #999;
}

.disabled .tip.down {
    border-top-color: #999;
}

.trough {
    display: flex;
    flex: 1;
}

.vertical .trough {
    flex-direction: column;
}

.trough::before, .trough::after {
    content: "";
    flex: 2;
}

.vertical .trough::before, .horizontal .trough::after {
    flex: 1;
}

.vertical .trough::after {
    flex: 1.8;
}

.vertical .thumb {
    height: 20px;
}

.horizontal .thumb {
    width: 65px;
}

.horizontal {
    margin-left: 2px;
    border-top: 1px solid #f0f0f0;
}

/* drawing */
.view {
    display: grid;
    grid-template: 28px 1fr 18px / 1fr 18px;
    min-width: 0;
    min-height: 0;
}

.toolbar {
    grid-column: span 2;
    display: flex;
    align-items: center;
    padding: 0 1px 2px 3px;
}

.plane {
    display: flex;
    align-items: center;
    width: 50px;
    height: 22px;
    margin-right: 3px;
}

.plane select {
    appearance: none;
    width: 26px;
    padding-left: 1px;
}

.knob {
    width: 16px;
    height: 6px;
    background: #f0f0f0;
    border: 1px solid #fff;
    border-color: #fff #696969 #696969 #fff;
    box-shadow: inset -1px -1px #a0a0a0;
}

.set {
    display: flex;
}

.set button {
    display: flex;
    align-items: center;
    justify-content: center;
    width: 24px;
    height: 24px;
}

.zoom button {
    width: 22px;
}

.set .on {
    background: #fff;
    border-color: #777 #eee #eee #777;
    box-shadow: none;
}

.caption {
    margin: 0 6px 0 5px;
    padding-left: 2px;
    border-left: 1px solid #999;
}

.timeout {
    margin-left: auto;
}

#timeout {
    width: 26px;
    height: 22px;
    margin: 0 1px 0 4px;
    padding-left: 2px;
    background: #fff;
    border: 1px solid #999;
}

.drop {
    display: flex;
    align-items: center;
    justify-content: center;
    width: 22px;
    height: 23px;
}

.drop i {
    border: 5px solid transparent;
    border-top: 9px solid #000;
    border-bottom: none;
}

.canvas {
    background: #fff;
    margin-left: 4px;
    min-height: 0;
    overflow: hidden;
}

.canvas svg {
    width: 100%;
    height: 100%;
}

.dash {
    stroke-dasharray: 3 3;
}

/* status line */
.status {
    display: flex;
    align-items: center;
    gap: 1px;
    height: 25px;
    flex: none;
}

.message {
    flex: 1;
    padding-left: 1px;
    color: #00008b;
}

.status output {
    width: 75px;
    height: 20px;
    padding-left: 2px;
    color: #8b0000;
    border: 1px solid #777;
    border-color: #777 #fff #fff #777;
}

/* taskbar */
.taskbar {
    display: flex;
    height: 40px;
    background: linear-gradient(90deg, #8ba1b9 0, #90a8c2 70px, #b1cfeb 110px, #b1cfeb 1050px, #8a9fb6 1095px);
    border-top: 1px solid #3c4a58;
    color: #fff;
    flex: none;
}

.start {
    width: 59px;
    padding-left: 8px;
}

.apps {
    display: flex;
    gap: 2px;
}

.apps button {
    display: flex;
    align-items: center;
    justify-content: center;
    width: 60px;
}

.apps .open {
    border: 1px solid #5d738a;
    border-radius: 3px;
    background: linear-gradient(135deg, #e4eef8, #c5d9ef 50%, #b6cfea);
    box-shadow: inset 0 0 0 1px #e6f0fa;
}

.apps .stacked {
    width: 55px;
    box-shadow: inset 0 0 0 1px #fff, 4px 0 0 -1px #dbe8f5, 5px 0 #5d738a;
}

.tray {
    display: flex;
    align-items: center;
    gap: 8px;
    margin-left: auto;
}

.lang {
    margin-right: 8px;
    padding-bottom: 4px;
}

.clock {
    margin: 0 4px 0 11px;
    line-height: 17px;
    text-align: center;
}

.desktop {
    align-self: stretch;
    width: 14px;
    border: 1px solid #4d6078;
    background: linear-gradient(135deg, #b9c8d8, #61809f);
}
```
